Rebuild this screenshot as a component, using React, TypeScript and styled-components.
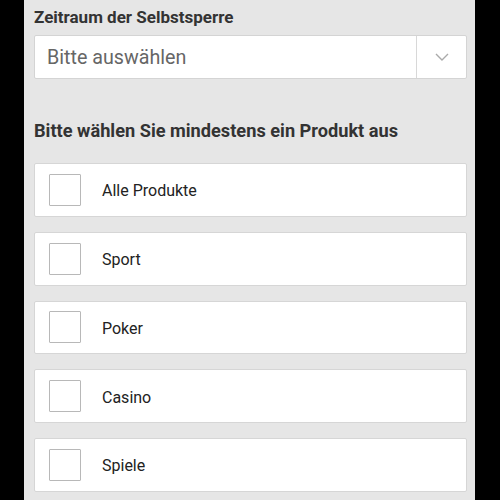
import React from "react";
import styled, { createGlobalStyle } from "styled-components";

const Global = createGlobalStyle`
  html, body { margin: 0; padding: 0; background: #000; }
  body { font-family: Roboto, "Noto Sans", sans-serif; }
`;

const Screen = styled.div`
  width: 500px;
  height: 500px;
  background: #000;
  display: flex;
  justify-content: flex-start;
  overflow: hidden;
`;

const Panel = styled.div`
  margin-left: 24px;
  width: 451px;
  background: #e6e6e6;
  padding: 6px 8px 0 10px;
  box-sizing: border-box;
  display: flex;
  flex-direction: column;
`;

const Label = styled.div<{ $size?: number }>`
  font-size: ${(p) => p.$size ?? 17}px;
  font-weight: 700;
  color: #333;
  line-height: 22px;
`;

const Select = styled.div`
  margin-top: 7px;
  height: 44px;
  background: #fff;
  border: 1px solid #d4d4d4;
  border-radius: 2px;
  box-sizing: border-box;
  display: flex;
  align-items: stretch;
`;

const Placeholder = styled.div`
  flex: 1;
  display: flex;
  align-items: center;
  padding-left: 12px;
  font-size: 19.7px;
  color: #666;
`;

const Arrow = styled.div`
  width: 49px;
  border-left: 1px solid #d8d8d8;
  display: flex;
  align-items: center;
  justify-content: center;
`;

const Heading = styled(Label)`
  margin-top: 41px;
`;

const List = styled.div`
  margin-top: 21px;
  display: flex;
  flex-direction: column;
  gap: 15px;
`;

const Card = styled.div`
  height: 53.75px;
  background: #fff;
  border: 1px solid #d6d6d6;
  border-radius: 2px;
  box-sizing: border-box;
  display: flex;
  align-items: center;
  padding-left: 14px;
`;

const Box = styled.div`
  width: 32px;
  height: 32px;
  border: 1px solid #b8b8b8;
  box-sizing: border-box;
  border-radius: 1px;
`;

const ItemText = styled.span`
  margin-left: 21px;
  padding-top: 2px;
  font-size: 16px;
  color: #222;
`;

const items = ["Alle Produkte", "Sport", "Poker", "Casino", "Spiele"];

export default function App() {
  return (
    <>
      <Global />
      <Screen>
        <Panel>
          <Label>Zeitraum der Selbstsperre</Label>
          <Select>
            <Placeholder>Bitte auswählen</Placeholder>
            <Arrow>
              <svg width="14" height="8" viewBox="0 0 14 8">
                <path d="M1 1l6 6 6-6" fill="none" stroke="#aaa" strokeWidth="1.4" />
              </svg>
            </Arrow>
          </Select>
          <Heading $size={18.2}>Bitte wählen Sie mindestens ein Produkt aus</Heading>
          <List>
            {items.map((t) => (
              <Card key={t}>
                <Box />
                <ItemText>{t}</ItemText>
              </Card>
            ))}
          </List>
        </Panel>
      </Screen>
    </>
  );
}
